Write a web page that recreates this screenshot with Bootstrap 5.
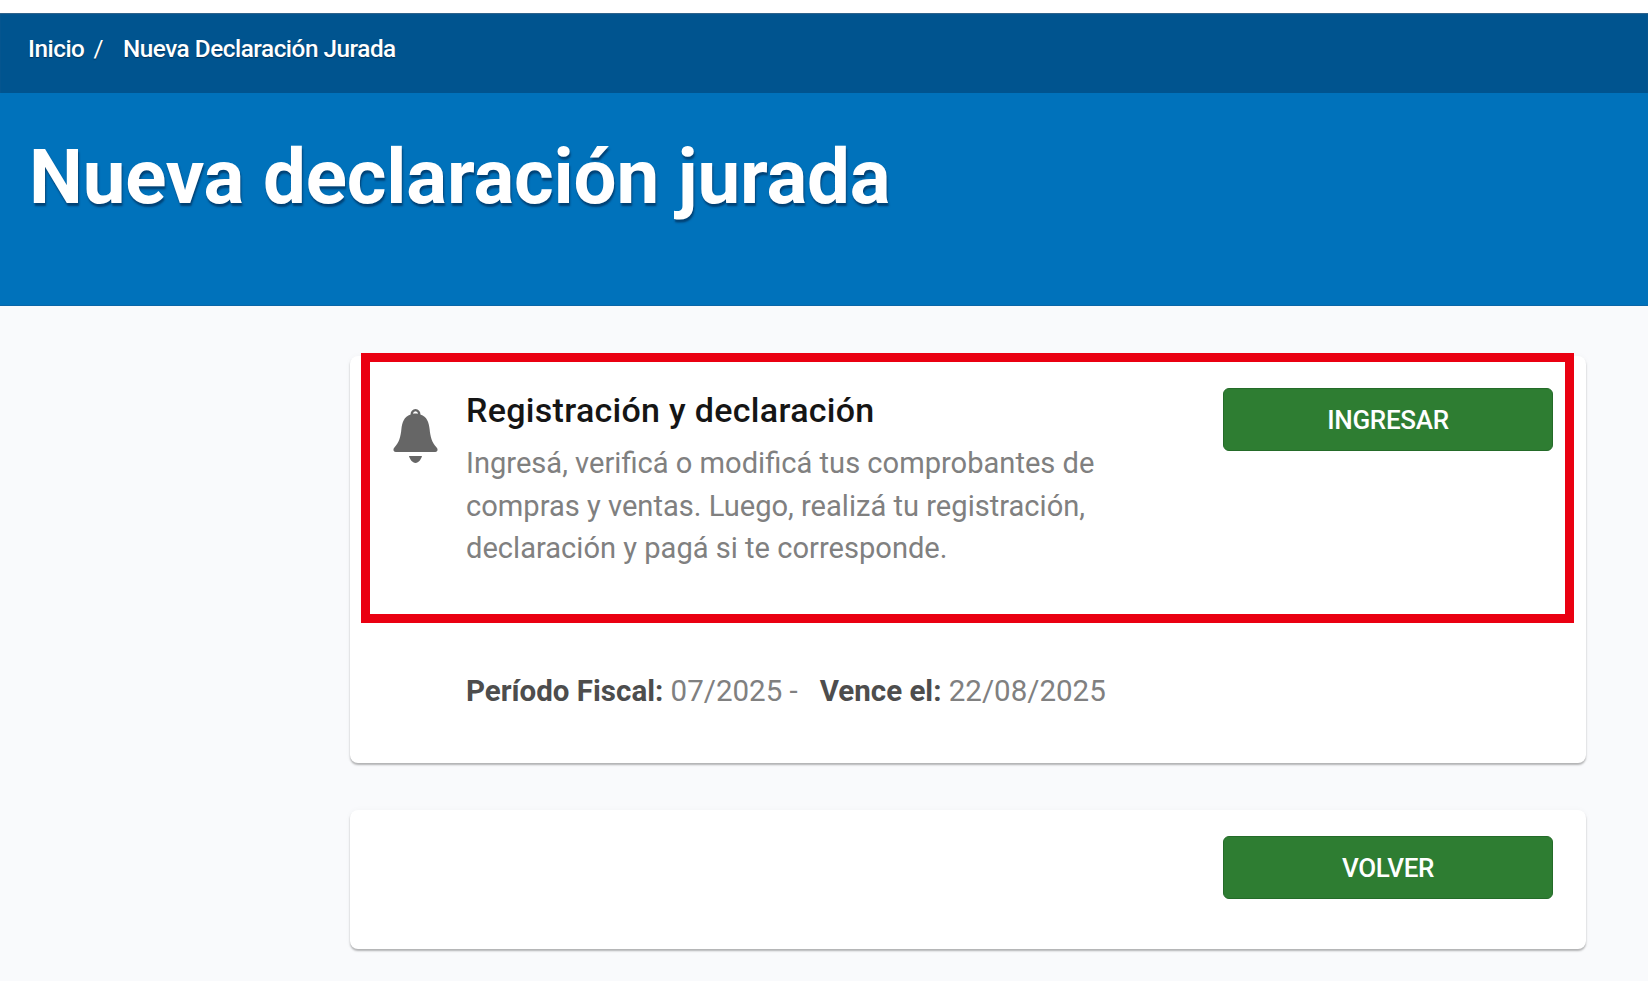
<!doctype html>
<html lang="es">
<head>
<meta charset="utf-8">
<title>Nueva declaración jurada</title>
<link rel="stylesheet" href="https://cdn.jsdelivr.net/npm/bootstrap@5.3.0/dist/css/bootstrap.min.css">
<style>
html,body{height:100%}
body{background:#f9fafc;font-family:Roboto,"Liberation Sans",sans-serif;overflow:hidden}
.top-gap{height:13px;background:#fff}
.crumb-bar{height:80px;background:#00548f;padding:0 0 8px 28px;box-shadow:inset 0 1px 1px #33658c}
.crumb-bar .breadcrumb{--bs-breadcrumb-margin-bottom:0;--bs-breadcrumb-divider-color:#fff;--bs-breadcrumb-item-padding-x:0;font-size:24.3px;font-weight:500;letter-spacing:-.47px;color:#fff;text-shadow:0 1px 1px rgba(0,30,60,.7)}
.crumb-bar .breadcrumb-item+.breadcrumb-item{padding-left:20px}
.crumb-bar .breadcrumb-item+.breadcrumb-item::before{display:none}
.crumb-sep{font-weight:400;margin-left:9px}
.crumb-bar a{color:#fff;text-decoration:none}
.crumb-bar .breadcrumb-item.active{color:#fff}
.hero-band{height:213px;background:#0072bb;padding:39px 0 0 29px;box-shadow:inset 0 -1px 0 #0a66a8}
.hero-title{font-size:76.3px;line-height:1.2;font-weight:700;color:#fff;margin:0;letter-spacing:-.2px;text-shadow:1px 3px 2px rgba(0,40,80,.65)}
.page-area{margin:50px 62px 0 350px}
.panel{border:0;border-radius:8px;background:#fff;box-shadow:0 2px 2px rgba(0,0,0,.28),0 0 6px rgba(0,0,0,.03)}
.panel-main{height:407px;padding:32px 33px 0 0}
.panel-foot{height:139px;margin-top:47px;padding:26px 33px 0 0}
.bell-col{width:116px;padding:21px 0 0 43px;flex:none}
.bell-col svg{display:block;width:45px;height:55px}
.decl-title{font-size:34px;font-weight:500;line-height:44px;color:#151515;margin:0 0 10px;letter-spacing:.3px}
.decl-text{font-size:29.1px;line-height:42.5px;color:#808080;margin:0;width:660px}
.action-btn{width:330px;height:63px;flex:none;background:#2e7d32;border:1px solid #246b29;border-radius:6px;color:#fff;font-size:26px;font-weight:500;letter-spacing:-.3px;display:flex;align-items:center;justify-content:center;padding:1px 0 0;text-transform:uppercase}
.action-btn:hover{background:#2e7d32;color:#fff}
.period-line{font-size:29.5px;line-height:40px;color:#808080;margin:101px 0 0 116px;white-space:pre}
.period-line b{font-weight:700;color:#4d4d4d}
.highlight-box{position:absolute;left:361px;top:353px;width:1213px;height:270px;border:9px solid #ea0011;pointer-events:none}
</style>
</head>
<body>
<div class="top-gap"></div>
<nav class="crumb-bar d-flex align-items-center" aria-label="breadcrumb">
  <ol class="breadcrumb">
    <li class="breadcrumb-item"><a href="#">Inicio</a><span class="crumb-sep">/</span></li>
    <li class="breadcrumb-item active" aria-current="page">Nueva Declaración Jurada</li>
  </ol>
</nav>
<header class="hero-band"><h1 class="hero-title">Nueva declaración jurada</h1></header>
<main class="page-area">
  <section class="card panel panel-main">
    <div class="d-flex">
      <div class="bell-col">
        <svg viewBox="0 0 45 55" fill="#666" aria-hidden="true">
          <path fill-rule="evenodd" d="M22.5 0a5 5 0 0 1 4.9 5.4C34 7.6 36 13.500 36.600 20c.7 7.500 2.200 13.500 7 18.500 1.500 1.600 1.400 4.500-1.400 4.500H2.800c-2.800 0-2.900-2.900-1.400-4.500 4.800-5 6.300-11 7-18.500C9 13.500 11 7.600 17.600 5.400A5 5 0 0 1 22.500 0zm0 2.300a2.700 2.700 0 0 0-2.500 2.500c1.600-.3 3.400-.3 5 0a2.700 2.700 0 0 0-2.500-2.500z"/>
          <path d="M16 47h13c-.7 3-3.400 7-6.500 7S16.700 50 16 47z"/>
        </svg>
      </div>
      <div class="flex-grow-1">
        <h2 class="decl-title">Registración y declaración</h2>
        <p class="decl-text">Ingresá, verificá o modificá tus comprobantes de compras y ventas. Luego, realizá tu registración, declaración y pagá si te corresponde.</p>
      </div>
      <a href="#" class="btn action-btn">Ingresar</a>
    </div>
    <p class="period-line"><b>Período Fiscal:</b> 07/2025 -   <b>Vence el:</b> 22/08/2025</p>
  </section>
  <section class="card panel panel-foot">
    <div class="d-flex justify-content-end"><a href="#" class="btn action-btn">Volver</a></div>
  </section>
</main>
<div class="highlight-box"></div>
<script src="https://cdn.jsdelivr.net/npm/bootstrap@5.3.0/dist/js/bootstrap.bundle.min.js"></script>
</body>
</html>
